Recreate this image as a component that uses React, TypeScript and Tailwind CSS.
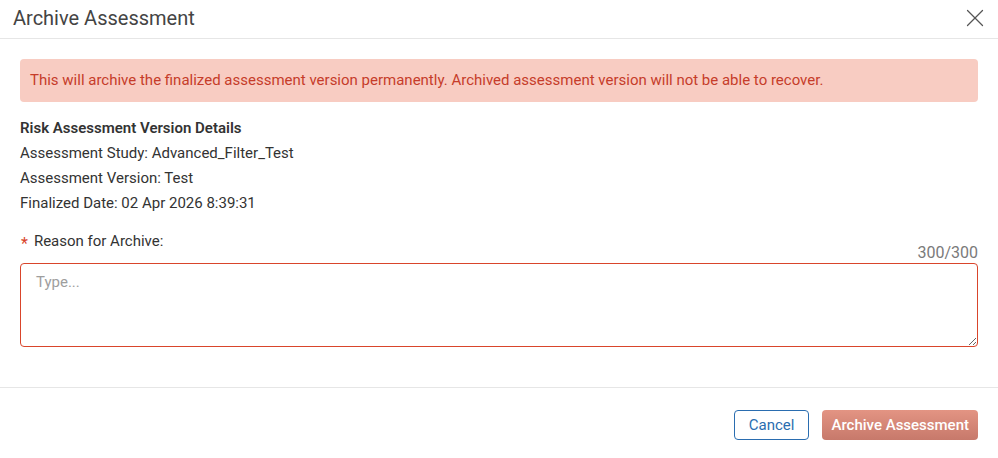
import React, { useState } from "react";
import { X } from "lucide-react";

const App = () => {
  const [reason, setReason] = useState("");

  return (
    <div className="w-[998px] h-[458px] bg-white text-[#333] font-['Roboto',_'Liberation_Sans',_sans-serif] flex flex-col">
      {/* Header */}
      <div className="h-[39px] flex items-center justify-between border-b border-[#e6e6e6] pl-[13px] pr-[8px]">
        <h2 className="text-[20px] text-[#444] leading-none -mt-[2px]">Archive Assessment</h2>
        <button className="text-[#555] -mt-[2px]">
          <X size={30} strokeWidth={1} />
        </button>
      </div>

      {/* Body */}
      <div className="px-[20px] pt-[20px] flex flex-col">
        <div className="h-[43px] flex items-center px-[10px] rounded-[4px] bg-[#f8ccc2] text-[#c63c2a] text-[15px]">
          This will archive the finalized assessment version permanently. Archived assessment version will not be able to recover.
        </div>

        <div className="mt-[14px] text-[15px] leading-[25px]">
          <div className="font-semibold">Risk Assessment Version Details</div>
          <div>Assessment Study: Advanced_Filter_Test</div>
          <div>Assessment Version: Test</div>
          <div>Finalized Date: 02 Apr 2026 8:39:31</div>
        </div>

        <div className="mt-[11px] text-[15px] leading-[25px] flex items-center">
          <span className="text-[#d9452b] text-[16px] ml-[1px] mr-[6px] mt-[4px]">*</span>
          <span>Reason for Archive:</span>
        </div>
        <div className="text-right text-[16px] text-[#7a7a7a] leading-[20px] -mt-[13px]">300/300</div>
        <textarea
          value={reason}
          onChange={(e) => setReason(e.target.value)}
          placeholder="Type..."
          className="h-[84px] w-full border border-[#d9452b] rounded-[4px] px-[15px] pt-[7px] pb-[9px] text-[15px] placeholder:text-[#9e9e9e] outline-none resize-y"
        />
      </div>

      {/* Footer */}
      <div className="mt-[40px] border-t border-[#e6e6e6] flex justify-end items-center gap-[13px] px-[20px] pt-[22px]">
        <button className="h-[30px] px-[14px] rounded-[4px] border border-[#2a6db0] text-[#2a6db0] text-[15px]">
          Cancel
        </button>
        <button className="h-[30px] px-[9px] rounded-[4px] bg-gradient-to-b from-[#e39483] to-[#c7796b] text-white text-[15px] font-medium">
          Archive Assessment
        </button>
      </div>
    </div>
  );
};

export default App;
